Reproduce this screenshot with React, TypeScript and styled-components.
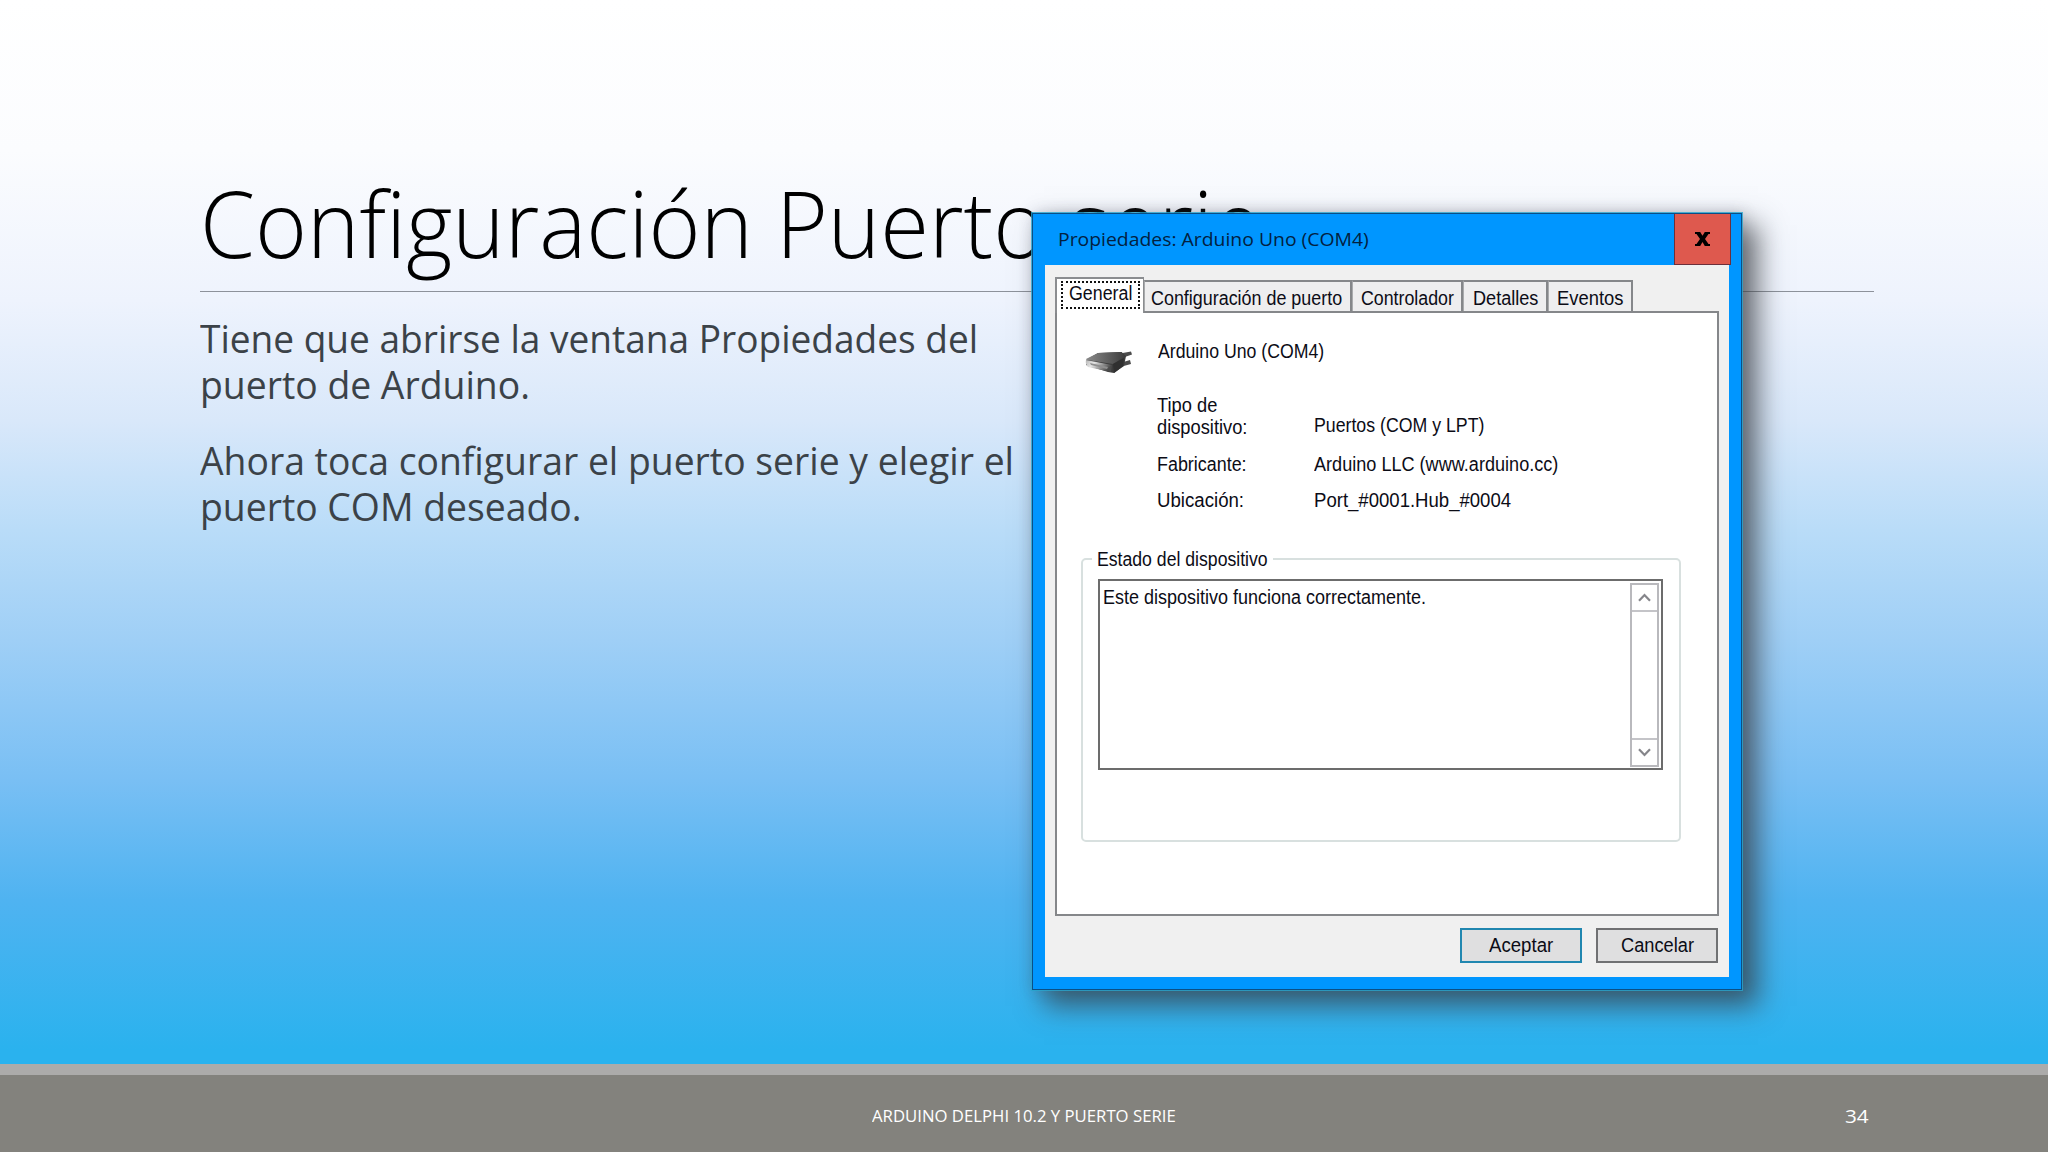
import React, { useLayoutEffect, useRef, useState } from "react";
import styled, { createGlobalStyle } from "styled-components";

const Global = createGlobalStyle`
  * { box-sizing: border-box; }
  html, body { margin: 0; padding: 0; background: #fff; }
`;

const humanist = `"Open Sans", "Noto Sans", sans-serif`;
const system = `"Liberation Sans", Arial, sans-serif`;

const FitBox = styled.span<{ $w: number; $lh: number }>`
  display: block;
  flex: none;
  width: ${(p) => p.$w}px;
  height: ${(p) => p.$lh}px;
  line-height: ${(p) => p.$lh}px;
  white-space: nowrap;
`;

const FitInner = styled.span`
  display: inline-block;
  vertical-align: top;
  transform-origin: 0 50%;
`;

/* Condenses one line of text horizontally to the given width. */
function Fit({ w, lh, children }: { w: number; lh: number; children: string }) {
  const ref = useRef<HTMLSpanElement>(null);
  const [scale, setScale] = useState(1);
  useLayoutEffect(() => {
    if (ref.current) setScale(w / ref.current.offsetWidth);
  }, [w, children]);
  return (
    <FitBox $w={w} $lh={lh}>
      <FitInner ref={ref} style={{ transform: `scaleX(${scale})` }}>
        {children}
      </FitInner>
    </FitBox>
  );
}

const Slide = styled.main`
  position: relative;
  width: 2048px;
  height: 1152px;
  overflow: hidden;
  display: flex;
  flex-direction: column;
  font-family: ${humanist};
  background: linear-gradient(
    180deg,
    #ffffff 0px,
    #fbfcfe 150px,
    #eef3fd 300px,
    #d9e8fa 420px,
    #b9dcf8 530px,
    #9fcff6 640px,
    #79bff4 780px,
    #4fb3f1 900px,
    #2ab2ee 1050px
  );
`;

const Content = styled.section`
  flex: 1;
  padding: 178px 174px 0 200px;
`;

const Heading = styled.h1`
  margin: 0 0 23px;
  padding-left: 0;
  font-size: 92px;
  font-weight: 300;
  color: #000;
`;

const Rule = styled.hr`
  margin: 0 0 23px;
  height: 1px;
  border: 0;
  background: #8d929b;
`;

const Paragraph = styled.p`
  margin: 0 0 30px;
  font-size: 38px;
  color: #3b4248;
`;

const Footer = styled.footer`
  height: 88px;
  border-top: 11px solid #acabaa;
  background: #83827d;
  color: #fff;
  display: flex;
  justify-content: space-between;
  padding: 30px 179px 0 872px;
  font-size: 17px;
`;

const PageNumber = styled.span`
  font-size: 19px;
`;

const Dialog = styled.div`
  position: absolute;
  left: 1032px;
  top: 213px;
  width: 710px;
  height: 777px;
  display: flex;
  flex-direction: column;
  padding: 0 12px 12px;
  border: 1px solid #0b4f86;
  background: #0096ff;
  box-shadow: 0 0 0 1px rgba(40, 165, 205, 0.8), 14px 14px 26px 2px rgba(55, 60, 65, 0.72),
    2px 0 14px rgba(60, 60, 80, 0.22);
  font-family: ${system};
  font-size: 19.5px;
  color: #0c0c16;
`;

const TitleBar = styled.header`
  flex: none;
  height: 51px;
  margin-right: -2px;
  padding-left: 13px;
  display: flex;
  justify-content: space-between;
  align-items: flex-start;
  font-family: ${humanist};
  font-size: 19px;
  color: #03213f;
`;

const Caption = styled.div`
  padding-top: 12px;
`;

const CloseButton = styled.button`
  width: 57px;
  height: 51px;
  padding: 0;
  border: 1px solid #6d2f3a;
  border-top: 0;
  background: #de594e;
  display: grid;
  place-items: center;
`;

const Body = styled.div`
  flex: 1;
  display: flex;
  flex-direction: column;
  padding: 12px 10px 14px 10px;
  background: #f0f0f0;
`;

const Tabs = styled.nav`
  flex: none;
  height: 34px;
  display: flex;
  align-items: flex-end;
`;

const Tab = styled.div<{ $w: number; $pad: number }>`
  width: ${(p) => p.$w}px;
  height: 31px;
  padding: 6px 0 0 ${(p) => p.$pad}px;
  border: 1.5px solid #85878a;
  border-width: 2px 2px 0 1px;
  border-left-color: #a9abad;
  background: #eeeeef;
`;

const ActiveTab = styled.div`
  position: relative;
  z-index: 1;
  width: 89px;
  height: 36px;
  margin-bottom: -2px;
  padding: 2px 3px 4px 4px;
  border: solid #8b8d90;
  border-width: 2px 1px 0 2px;
  background: #fff;
`;

const Focus = styled.div`
  height: 28px;
  padding: 0 0 0 6px;
  border: 2px dotted #111;
`;

const Panel = styled.div`
  height: 605px;
  padding: 27px 35px 0 24px;
  border: 2px solid #85878a;
  background: #fff;
  display: flex;
  flex-direction: column;
`;

const Device = styled.div`
  display: flex;
  gap: 25px;
  padding-left: 3px;
  height: 54px;
`;

const DeviceIcon = styled.svg`
  width: 49px;
  height: 25px;
  margin-top: 10px;
`;

const Facts = styled.dl`
  margin: 0;
  padding-left: 76px;
  display: grid;
  grid-template-columns: 157px 1fr;
  grid-template-rows: 44px 22px 22px;
  row-gap: 14.5px;
`;

const Term = styled.dt``;

const Fact = styled.dd<{ $lift?: boolean }>`
  margin: 0;
  align-self: end;
  padding-bottom: ${(p) => (p.$lift ? 2 : 0)}px;
`;

const Status = styled.fieldset`
  margin: 37px 0 0;
  width: 600px;
  height: 294px;
  padding: 9px 16px 0 9px;
  border: 2px solid #d8e0df;
  border-radius: 5px;
`;

const Legend = styled.legend`
  padding: 0 5px;
`;

const StatusBox = styled.div`
  width: 565px;
  height: 191px;
  margin-left: 6px;
  padding: 2px 2px 2px 3px;
  border: 2px solid #6c6c6c;
  background: #fff;
  display: flex;
  justify-content: space-between;
`;

const Message = styled.div`
  padding-top: 3px;
`;

const ScrollBar = styled.div`
  width: 29px;
  height: 184px;
  border: 2px solid #b9b9bd;
  display: flex;
  flex-direction: column;
  justify-content: space-between;
`;

const ScrollArrow = styled.div<{ $down?: boolean }>`
  height: 27px;
  display: grid;
  place-items: center;
  border: solid #c4c4c8;
  border-width: ${(p) => (p.$down ? "2px 0 0" : "0 0 2px")};
`;

const Actions = styled.div`
  display: flex;
  justify-content: flex-end;
  gap: 14px;
  padding: 12px 1px 0 0;
`;

const Action = styled.button<{ $primary?: boolean }>`
  width: 122px;
  height: 35px;
  padding: 0 0 2px;
  display: grid;
  place-items: center;
  font: inherit;
  color: inherit;
  background: #dfdfe0;
  border: 2px solid ${(p) => (p.$primary ? "#2187b0" : "#707173")};
`;

const Chevron = ({ down }: { down?: boolean }) => (
  <svg width="13" height="9" viewBox="0 0 13 9" fill="none" stroke="#85858a" strokeWidth="2.2">
    <path d={down ? "M1 1.2 6.5 7 12 1.2" : "M1 7.8 6.5 2 12 7.8"} />
  </svg>
);

const SerialPlug = () => (
  <DeviceIcon viewBox="0 0 49 25">
    <defs>
      <linearGradient id="shell" x1="0" y1="0" x2="1" y2="0">
        <stop offset="0" stopColor="#8a8a8a" />
        <stop offset="1" stopColor="#3f3f3f" />
      </linearGradient>
      <linearGradient id="face" x1="0" y1="0" x2="1" y2="0.4">
        <stop offset="0" stopColor="#b5b5b5" />
        <stop offset="0.35" stopColor="#e6e6e6" />
        <stop offset="1" stopColor="#4a4a4a" />
      </linearGradient>
    </defs>
    <path d="M33 4 47 1.5 48 4.5 38 8ZM36 13 46 10 47 14 36 17Z" fill="#4b4b4b" />
    <path d="M2 10 14 3 37 2 42 6 40 16 30 23 24 22 2 15Z" fill="#3c3c3c" />
    <path d="M2 9 14 3 38 2 40 7 29 14 3 10Z" fill="url(#shell)" />
    <path d="M2 10 28 15 27 22 4 17Q1 14 2 10Z" fill="url(#face)" />
    <path d="M6 13 24 17 23 19 7 15Z" fill="#8f8f8f" />
    <path d="M29 14 40 8 39 16 30 23Z" fill="#303030" />
  </DeviceIcon>
);

const tabs = [
  { label: "Configuración de puerto", width: 208, pad: 6, text: 191 },
  { label: "Controlador", width: 111, pad: 8, text: 93 },
  { label: "Detalles", width: 85, pad: 9, text: 65 },
  { label: "Eventos", width: 85, pad: 8, text: 66 },
];

export default function App() {
  return (
    <>
      <Global />
      <Slide>
        <Content>
          <Heading>
            <Fit w={1062} lh={90}>Configuración Puerto serie</Fit>
          </Heading>
          <Rule />
          <Paragraph>
            <Fit w={778} lh={46}>Tiene que abrirse la ventana Propiedades del</Fit>
            <Fit w={330} lh={46}>puerto de Arduino.</Fit>
          </Paragraph>
          <Paragraph>
            <Fit w={814} lh={46}>Ahora toca configurar el puerto serie y elegir el</Fit>
            <Fit w={381} lh={46}>puerto COM deseado.</Fit>
          </Paragraph>
        </Content>
        <Footer>
          <Fit w={304} lh={22}>ARDUINO DELPHI 10.2 Y PUERTO SERIE</Fit>
          <PageNumber>
            <Fit w={24} lh={22}>34</Fit>
          </PageNumber>
        </Footer>

        <Dialog role="dialog">
          <TitleBar>
            <Caption>
              <Fit w={311} lh={26}>Propiedades: Arduino Uno (COM4)</Fit>
            </Caption>
            <CloseButton aria-label="Cerrar">
              <svg width="15" height="14" viewBox="0 0 15 14">
                <path
                  d="M0 0H5.2L7.5 3.8 9.8 0H15V2H13.5L10 7 13.5 12H15V14H9.8L7.5 10 5.2 14H0V12H1.5L5 7 1.5 2H0Z"
                  fill="#000"
                />
              </svg>
            </CloseButton>
          </TitleBar>
          <Body>
            <Tabs>
              <ActiveTab>
                <Focus>
                  <Fit w={63} lh={20}>General</Fit>
                </Focus>
              </ActiveTab>
              {tabs.map((t) => (
                <Tab key={t.label} $w={t.width} $pad={t.pad}>
                  <Fit w={t.text} lh={20}>{t.label}</Fit>
                </Tab>
              ))}
            </Tabs>
            <Panel>
              <Device>
                <SerialPlug />
                <Fit w={166} lh={22}>Arduino Uno (COM4)</Fit>
              </Device>
              <Facts>
                <Term>
                  <Fit w={60} lh={22}>Tipo de</Fit>
                  <Fit w={90} lh={22}>dispositivo:</Fit>
                </Term>
                <Fact $lift>
                  <Fit w={170} lh={22}>Puertos (COM y LPT)</Fit>
                </Fact>
                <Term>
                  <Fit w={90} lh={22}>Fabricante:</Fit>
                </Term>
                <Fact>
                  <Fit w={244} lh={22}>Arduino LLC (www.arduino.cc)</Fit>
                </Fact>
                <Term>
                  <Fit w={87} lh={22}>Ubicación:</Fit>
                </Term>
                <Fact>
                  <Fit w={197} lh={22}>Port_#0001.Hub_#0004</Fit>
                </Fact>
              </Facts>
              <Status>
                <Legend>
                  <Fit w={171} lh={22}>Estado del dispositivo</Fit>
                </Legend>
                <StatusBox>
                  <Message>
                    <Fit w={323} lh={22}>Este dispositivo funciona correctamente.</Fit>
                  </Message>
                  <ScrollBar>
                    <ScrollArrow>
                      <Chevron />
                    </ScrollArrow>
                    <ScrollArrow $down>
                      <Chevron down />
                    </ScrollArrow>
                  </ScrollBar>
                </StatusBox>
              </Status>
            </Panel>
            <Actions>
              <Action $primary>
                <Fit w={64} lh={22}>Aceptar</Fit>
              </Action>
              <Action>
                <Fit w={73} lh={22}>Cancelar</Fit>
              </Action>
            </Actions>
          </Body>
        </Dialog>
      </Slide>
    </>
  );
}
